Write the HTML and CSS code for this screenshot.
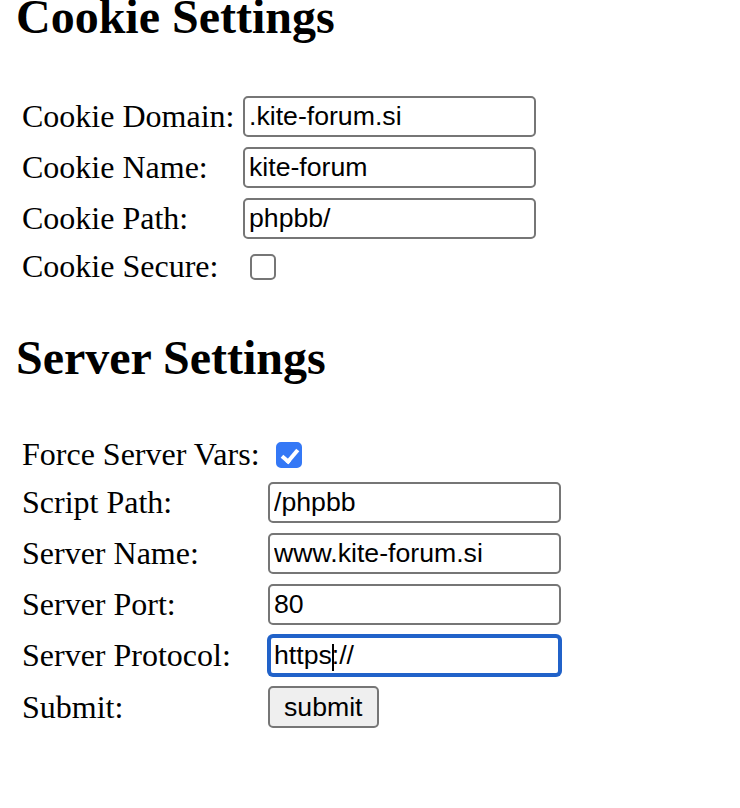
FILE: index.html
```html
<!DOCTYPE html>
<html>
<head>
    <title>Forum Settings</title>
    <link rel="stylesheet" href="styles.css">
</head>
<body>
    <h2 class="heading heading-first">Cookie Settings</h2>
    <form class="settings settings-cookie">
        <label class="label" for="cookie-domain">Cookie Domain:</label>
        <input class="field" type="text" id="cookie-domain" value=".kite-forum.si">

        <label class="label" for="cookie-name">Cookie Name:</label>
        <input class="field" type="text" id="cookie-name" value="kite-forum">

        <label class="label" for="cookie-path">Cookie Path:</label>
        <input class="field" type="text" id="cookie-path" value="phpbb/">

        <label class="label" for="cookie-secure">Cookie Secure:</label>
        <input class="check" type="checkbox" id="cookie-secure">
    </form>

    <h2 class="heading">Server Settings</h2>
    <form class="settings settings-server">
        <label class="label" for="force-vars">Force Server Vars:</label>
        <input class="check" type="checkbox" id="force-vars" checked>

        <label class="label" for="script-path">Script Path:</label>
        <input class="field" type="text" id="script-path" value="/phpbb">

        <label class="label" for="server-name">Server Name:</label>
        <input class="field" type="text" id="server-name" value="www.kite-forum.si">

        <label class="label" for="server-port">Server Port:</label>
        <input class="field" type="text" id="server-port" value="80">

        <label class="label" for="server-protocol">Server Protocol:</label>
        <div class="field-wrap">
            <input class="field field-focus" type="text" id="server-protocol" value="https://">
            <span class="caret"></span>
        </div>

        <span class="label">Submit:</span>
        <button class="button" type="button">submit</button>
    </form>
</body>
</html>
```

FILE: styles.css
```css
html { background: #fff; }
body { margin: 0 16px; font-family: "Liberation Serif", "Times New Roman", serif; font-size: 32px; color: #000; }

.heading { font-size: 48px; font-weight: bold; line-height: 53px; margin: 47px 0 53px; }
.heading-first { margin-top: -10px; }

.settings { display: grid; grid-template-columns: 221px 293px; row-gap: 10px; align-items: center; padding-left: 6px; }
.settings-server { grid-template-columns: 246px 293px; }

.label { line-height: 35px; white-space: nowrap; }

.field { box-sizing: border-box; width: 293px; height: 41px; margin: 0; padding: 0 4px; border: 2px solid #767676; border-radius: 5px; background: #fff; color: #000; font-family: "Liberation Sans", Arial, sans-serif; font-size: 26.67px; outline: none; }
.field-wrap { position: relative; width: 293px; height: 41px; }
.field-focus { border: 3px solid #2162c9; padding-left: 3px; box-shadow: 0 0 0 1px #2162c9; }
.caret { position: absolute; left: 64px; top: 9px; width: 2px; height: 27px; background: #000; }

.check { appearance: none; -webkit-appearance: none; position: relative; justify-self: start; box-sizing: border-box; width: 26px; height: 26px; margin: 0 0 0 7px; border: 2px solid #767676; border-radius: 5px; background: #fff; }
.settings-server .check { margin-left: 8px; }
.check:checked { background: #3478f6; border-color: #3478f6; }
.check:checked::after { content: ""; position: absolute; left: 7px; top: 2px; width: 6px; height: 13px; border: solid #fff; border-width: 0 4px 4px 0; transform: rotate(40deg); }

.button { justify-self: start; box-sizing: border-box; height: 42px; margin: 0; padding: 0 14px; border: 2px solid #767676; border-radius: 5px; background: #efefef; color: #000; font-family: "Liberation Sans", Arial, sans-serif; font-size: 26.67px; }
```
